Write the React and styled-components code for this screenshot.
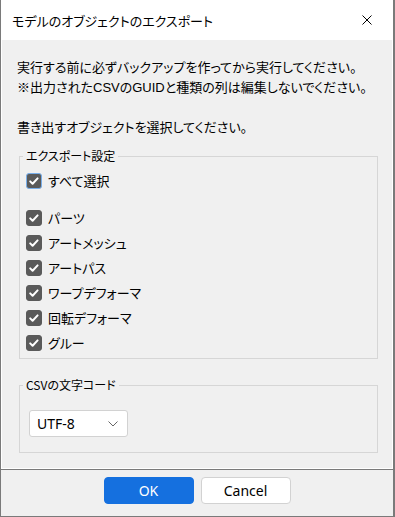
import React from 'react';
import styled, { createGlobalStyle } from 'styled-components';

const GlobalStyle = createGlobalStyle`
  html, body { margin: 0; padding: 0; background: #ffffff; }
  * { box-sizing: border-box; }
`;

const Window = styled.div`
  width: 395px;
  height: 517px;
  display: flex;
  flex-direction: column;
  background: #ffffff;
  border-left: 1px solid #7a7a7a;
  border-right: 2px solid #7a7a7a;
  border-bottom: 1px solid #7a7a7a;
  font-family: "Noto Sans CJK JP", "Noto Sans", sans-serif;
  font-feature-settings: "palt";
  color: #000000;
`;

const TitleBar = styled.div`
  height: 40px;
  flex: none;
  display: flex;
  align-items: center;
  justify-content: space-between;
  padding: 0 21px 0 11px;
  font-size: 13px;
`;

const CloseButton = styled.div`
  width: 10px;
  height: 10px;
  display: flex;
`;

const Panel = styled.div`
  flex: 1;
  margin: 0 1px 1px 1px;
  background: #f0f0f0;
  padding: 18px 14px 0 15px;
  display: flex;
  flex-direction: column;
`;

const Message = styled.p`
  margin: 0;
  font-family: "Liberation Sans", "Noto Sans CJK JP", sans-serif;
  font-size: 13px;
  line-height: 20px;
  white-space: pre-line;
`;

const Group = styled.fieldset`
  margin: ${(p) => p.$mt}px 0 0 2px;
  padding: ${(p) => p.$pt}px 3px ${(p) => p.$pb}px 3px;
  border: 1px solid #d6d6d6;
  min-width: 0;
`;

const Legend = styled.legend`
  padding: 0 3px;
  font-size: 12px;
  line-height: 16px;
`;

const CheckList = styled.div`
  display: flex;
  flex-direction: column;
  gap: 5px;
  padding-left: 3px;
  margin-top: 17px;
`;

const CheckRow = styled.label`
  display: flex;
  align-items: center;
  gap: 6px;
  height: 20px;
  font-size: 13px;
  line-height: 20px;
`;

const Box = styled.span`
  width: 16px;
  height: 16px;
  border-radius: 3px;
  background: #5a5a5a;
  border: 1px solid ${(p) => (p.$focus ? '#78aeea' : '#5a5a5a')};
  display: flex;
  align-items: center;
  justify-content: center;
  flex: none;
`;

const SelectAllWrap = styled.div`
  padding-left: 3px;
`;

const Select = styled.div`
  width: 99px;
  height: 27px;
  margin-left: 6px;
  background: #ffffff;
  border: 1px solid #d2d2d2;
  border-radius: 3px;
  display: flex;
  align-items: center;
  justify-content: space-between;
  padding: 0 9px 0 7px;
  font-family: "Noto Sans", sans-serif;
  font-size: 14px;
`;

const Separator = styled.div`
  height: 1px;
  flex: none;
  background: #7a7a7a;
`;

const Footer = styled.div`
  height: 46px;
  flex: none;
  background: #f0f0f0;
  display: flex;
  justify-content: center;
  align-items: flex-start;
  gap: 7px;
  padding-top: 7px;
`;

const Button = styled.button`
  width: 90px;
  height: 27px;
  border-radius: 4px;
  font-family: "Noto Sans", sans-serif;
  font-size: 14px;
  padding: 0;
  background: ${(p) => (p.$primary ? '#1570df' : '#ffffff')};
  color: ${(p) => (p.$primary ? '#ffffff' : '#000000')};
  border: 1px solid ${(p) => (p.$primary ? '#1570df' : '#d2d2d2')};
`;

const Check = ({ focus }) => (
  <Box $focus={focus}>
    <svg width="12" height="12" viewBox="0 0 12 12">
      <path d="M2.2 6.4 L4.6 8.8 L9.6 3.4" stroke="#fff" strokeWidth="2" fill="none" strokeLinecap="round" strokeLinejoin="round" />
    </svg>
  </Box>
);

const items = ['パーツ', 'アートメッシュ', 'アートパス', 'ワープデフォーマ', '回転デフォーマ', 'グルー'];

export default function App() {
  return (
    <>
      <GlobalStyle />
      <Window>
        <TitleBar>
          <span>モデルのオブジェクトのエクスポート</span>
          <CloseButton>
            <svg width="10" height="10" viewBox="0 0 10 10">
              <path d="M0.5 0.5 L9.5 9.5 M9.5 0.5 L0.5 9.5" stroke="#000" strokeWidth="1" />
            </svg>
          </CloseButton>
        </TitleBar>
        <Panel>
          <Message>
            {'実行する前に必ずバックアップを作ってから実行してください。\n※出力されたCSVのGUIDと種類の列は編集しないでください。\n\n書き出すオブジェクトを選択してください。'}
          </Message>
          <Group $mt={10} $pt={7} $pb={5}>
            <Legend>エクスポート設定</Legend>
            <SelectAllWrap>
              <CheckRow>
                <Check focus />
                すべて選択
              </CheckRow>
            </SelectAllWrap>
            <CheckList>
              {items.map((t) => (
                <CheckRow key={t}>
                  <Check />
                  {t}
                </CheckRow>
              ))}
            </CheckList>
          </Group>
          <Group $mt={18} $pt={17} $pb={15}>
            <Legend>CSVの文字コード</Legend>
            <Select>
              <span>UTF-8</span>
              <svg width="10" height="6" viewBox="0 0 10 6">
                <path d="M0.5 0.5 L5 5 L9.5 0.5" stroke="#666" strokeWidth="1" fill="none" />
              </svg>
            </Select>
          </Group>
        </Panel>
        <Separator />
        <Footer>
          <Button $primary>OK</Button>
          <Button>Cancel</Button>
        </Footer>
      </Window>
    </>
  );
}
